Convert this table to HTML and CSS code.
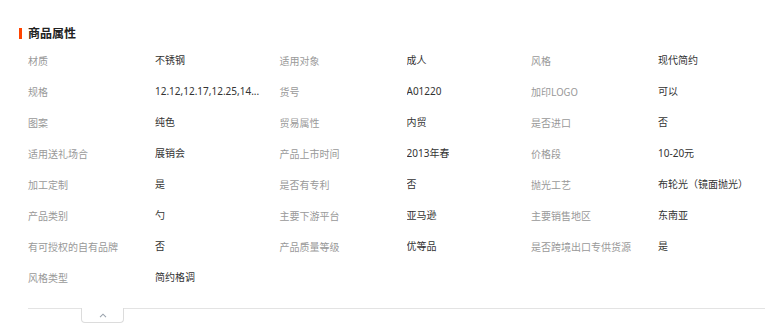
FILE: index.html
```html
<!DOCTYPE html>
<html lang="zh-CN">
<head>
<meta charset="utf-8">
<title>商品属性</title>
<link rel="stylesheet" href="styles.css">
</head>
<body>
<section class="attrs">
  <h2 class="attrs-title">商品属性</h2>
  <div class="attrs-grid">
    <div class="attr"><span class="attr-name">材质</span><span class="attr-value">不锈钢</span></div>
    <div class="attr"><span class="attr-name">适用对象</span><span class="attr-value">成人</span></div>
    <div class="attr"><span class="attr-name">风格</span><span class="attr-value">现代简约</span></div>

    <div class="attr"><span class="attr-name">规格</span><span class="attr-value">12.12,12.17,12.25,14...</span></div>
    <div class="attr"><span class="attr-name">货号</span><span class="attr-value">A01220</span></div>
    <div class="attr"><span class="attr-name">加印LOGO</span><span class="attr-value">可以</span></div>

    <div class="attr"><span class="attr-name">图案</span><span class="attr-value">纯色</span></div>
    <div class="attr"><span class="attr-name">贸易属性</span><span class="attr-value">内贸</span></div>
    <div class="attr"><span class="attr-name">是否进口</span><span class="attr-value">否</span></div>

    <div class="attr"><span class="attr-name">适用送礼场合</span><span class="attr-value">展销会</span></div>
    <div class="attr"><span class="attr-name">产品上市时间</span><span class="attr-value">2013年春</span></div>
    <div class="attr"><span class="attr-name">价格段</span><span class="attr-value">10-20元</span></div>

    <div class="attr"><span class="attr-name">加工定制</span><span class="attr-value">是</span></div>
    <div class="attr"><span class="attr-name">是否有专利</span><span class="attr-value">否</span></div>
    <div class="attr"><span class="attr-name">抛光工艺</span><span class="attr-value">布轮光（镜面抛光）</span></div>

    <div class="attr"><span class="attr-name">产品类别</span><span class="attr-value">勺</span></div>
    <div class="attr"><span class="attr-name">主要下游平台</span><span class="attr-value">亚马逊</span></div>
    <div class="attr"><span class="attr-name">主要销售地区</span><span class="attr-value">东南亚</span></div>

    <div class="attr"><span class="attr-name">有可授权的自有品牌</span><span class="attr-value">否</span></div>
    <div class="attr"><span class="attr-name">产品质量等级</span><span class="attr-value">优等品</span></div>
    <div class="attr"><span class="attr-name">是否跨境出口专供货源</span><span class="attr-value">是</span></div>

    <div class="attr"><span class="attr-name">风格类型</span><span class="attr-value">简约格调</span></div>
  </div>
  <div class="attrs-footer">
    <button class="collapse-tab" type="button" aria-label="收起">
      <svg width="8" height="5" viewBox="0 0 8 5"><path d="M1 4.2 L4 1.2 L7 4.2" fill="none" stroke="#9aa3ad" stroke-width="1.1"/></svg>
    </button>
  </div>
</section>
</body>
</html>
```

FILE: styles.css
```css
html, body {
  margin: 0;
  padding: 0;
  background: #fff;
  overflow: hidden;
}

body {
  font-family: "Noto Sans", "Noto Sans CJK SC", sans-serif;
  font-size: 10px;
  color: #333;
}

.attrs {
  padding-top: 25px;
}

.attrs-title {
  display: flex;
  align-items: center;
  margin: 0 0 0 19px;
  font-size: 12px;
  line-height: 16px;
  font-weight: bold;
  color: #222;
  font-family: "Noto Sans CJK SC", sans-serif;
}

.attrs-title::before {
  content: "";
  width: 3px;
  height: 11px;
  margin-right: 6px;
  background: #ff4400;
}

.attrs-grid {
  display: grid;
  grid-template-columns: 251.5px 251.5px 1fr;
  margin-top: 3.5px;
  padding-left: 28px;
}

.attr {
  display: flex;
  line-height: 31px;
  height: 31px;
  white-space: nowrap;
}

.attr-name {
  width: 127px;
  flex: none;
  color: #999;
  font-family: "Noto Sans CJK SC", sans-serif;
}

.attr-value {
  color: #333;
  overflow: hidden;
  text-overflow: ellipsis;
  max-width: 110px;
}

.attrs-footer {
  margin: 15.5px 0 0 28px;
  border-top: 1px solid #e3e3e3;
  display: flex;
}

.collapse-tab {
  margin: -1px 0 0 53px;
  width: 43px;
  height: 15px;
  padding: 0;
  background: #fff;
  border: 1px solid #dcdcdc;
  border-top: none;
  border-radius: 0 0 4px 4px;
  display: flex;
  align-items: center;
  justify-content: center;
  cursor: pointer;
}
```
